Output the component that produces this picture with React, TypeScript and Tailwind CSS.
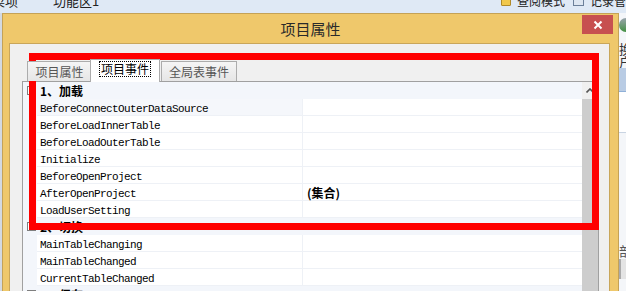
const loadRows = [
  "BeforeConnectOuterDataSource",
  "BeforeLoadInnerTable",
  "BeforeLoadOuterTable",
  "Initialize",
  "BeforeOpenProject",
  "AfterOpenProject",
  "LoadUserSetting",
];

const switchRows = ["MainTableChanging", "MainTableChanged", "CurrentTableChanged"];

const cjk = "font-['Noto_Sans_CJK_SC','Noto_Sans',sans-serif]";

function Category({ label }: { label: string }) {
  return (
    <div className="flex h-[17px] items-center bg-[#f3f6fb]">
      <div className="flex w-[14px] justify-center pl-[2px]">
        <div className="relative h-[9px] w-[9px] border border-[#7f7f7f] bg-white">
          <div className="absolute left-[1px] top-[3px] h-px w-[5px] bg-black" />
        </div>
      </div>
      <span className={`pl-[3px] pt-[1px] text-[12px] font-bold leading-none text-black ${cjk}`}>{label}</span>
    </div>
  );
}

function Row({ name, value, active }: { name: string; value?: string; active?: boolean }) {
  return (
    <div className="flex h-[17px]">
      <div className="w-[14px] bg-[#f3f6fb]" />
      <div
        className={`flex w-[266px] items-center border-b border-r border-[#eef1f6] pl-[3px] pt-[4px] font-['Liberation_Mono',monospace] text-[11px] tracking-[-0.6px] text-black ${
          active ? "bg-[#f5f7fb]" : "bg-white"
        }`}
      >
        {name}
      </div>
      <div className="flex flex-1 items-center border-b border-[#eef1f6] bg-white pl-[4px] pt-[2px]">
        {value && <span className={`text-[12px] font-bold leading-none text-black ${cjk}`}>{value}</span>}
      </div>
    </div>
  );
}

export default function App() {
  return (
    <div className={`relative h-[291px] w-[626px] overflow-hidden bg-[#dfe9f5] ${cjk}`}>
      {/* ribbon strip behind the dialog */}
      <div className="flex h-[13px] overflow-hidden text-[13px] leading-[13px] text-[#222]">
        <div className="-mt-[12px] flex w-full items-center">
          <span className="-ml-[8px]">菜项</span>
          <span className="ml-[35px]">功能区1</span>
          <span className="ml-auto flex items-center">
            <span className="mr-[6px] h-[10px] w-[10px] rounded-[1px] border border-[#b08a2a] bg-[#f1c84c]" />
            <span className="text-[12px]">查阅模式</span>
            <span className="ml-[8px] mr-[6px] h-[10px] w-[11px] border border-[#6b7f99] bg-[#dde6f1]" />
            <span className="text-[12px]">记录管</span>
          </span>
        </div>
      </div>

      <div className="flex h-[278px]">
        <div className="w-[2px] bg-[#d3d9e1]" />

        {/* dialog */}
        <div className="flex w-[617px] flex-col border border-b-0 border-[#c4a257] bg-[#efc86b]">
          <div className="relative flex h-[29px] shrink-0 items-center justify-center">
            <span className="text-[15px] leading-none text-[#2a2a2a]">项目属性</span>
            <div className="absolute right-[5px] top-[1px] flex h-[19px] w-[31px] items-center justify-center bg-[#c75050]">
              <svg width="10" height="10" viewBox="0 0 10 10">
                <path d="M1.5 1.5L8.5 8.5M8.5 1.5L1.5 8.5" stroke="white" strokeWidth="2" />
              </svg>
            </div>
          </div>

          <div className="ml-[6px] mr-[8px] min-h-0 flex-1 overflow-hidden border border-b-0 border-[#c9a65a] bg-[#f0f0f0] pl-[12px] pt-[15px]">
            {/* tabs */}
            <div className="relative z-10 flex h-[22px] items-start pl-[5px] text-[12px] leading-none">
              <div className="mt-[2px] flex h-[20px] w-[65px] items-center justify-center border border-b-0 border-[#acacac] bg-gradient-to-b from-[#f5f5f5] to-[#e6e6e6] text-[#555]">
                项目属性
              </div>
              <div className="-ml-[2px] flex h-[23px] w-[70px] justify-center border border-b-0 border-[#acacac] bg-white pt-[1px] text-black">
                <div className="flex h-[16px] items-center border border-dotted border-black px-[1px]">项目事件</div>
              </div>
              <div className="ml-[1px] mt-[2px] flex h-[20px] w-[76px] items-center justify-center border border-b-0 border-[#acacac] bg-gradient-to-b from-[#f5f5f5] to-[#e6e6e6] text-[#555]">
                全局表事件
              </div>
            </div>

            {/* property grid */}
            <div className="flex h-[220px] w-[577px] border border-b-0 border-[#a0a0a0] bg-white">
              <div className="flex-1">
                <Category label="1、加载" />
                {loadRows.map((r, i) => (
                  <Row key={r} name={r} active={i === 0} value={r === "AfterOpenProject" ? "(集合)" : undefined} />
                ))}
                <Category label="2、切换" />
                {switchRows.map((r) => (
                  <Row key={r} name={r} />
                ))}
                <Category label="3、保存" />
              </div>
              <div className="flex w-[16px] flex-col">
                <div className="flex h-[17px] justify-center bg-[#f0f0f0] pt-[6px]">
                  <svg width="8" height="5" viewBox="0 0 8 5">
                    <path d="M0.5 4.5L4 1L7.5 4.5" stroke="#555" strokeWidth="1.6" fill="none" />
                  </svg>
                </div>
                <div className="flex-1 bg-[#cdcdcd]" />
              </div>
            </div>
          </div>
        </div>

        {/* app content peeking at the right edge */}
        <div className="flex flex-1 flex-col overflow-hidden bg-[#f4f6f9]">
          <div className="mt-[5px] h-[14px] w-[7px] shrink-0 rounded-l-full bg-gradient-to-b from-[#9aa3ad] to-[#3f8f3f]" />
          <div className="mt-[10px] h-[14px] shrink-0 text-[13px] leading-[14px] text-[#333]">换</div>
          <div className="h-[12px] shrink-0 text-[13px] leading-[12px] text-[#333]">户</div>
          <div className="h-[23px] shrink-0 bg-[#b9cce4]" />
          <div className="h-px shrink-0 bg-[#8fb0d8]" />
          <div className="h-[40px] shrink-0 bg-white" />
          <div className="h-px shrink-0 bg-[#c9d4e2]" />
          <div className="mt-[110px] h-[16px] shrink-0 text-[13px] leading-[16px] text-[#555]">部</div>
          <div className="h-[20px] shrink-0 border-l-2 border-[#aaa] bg-[#e4e4e4]" />
        </div>
      </div>

      {/* red annotation frame */}
      <div className="absolute left-[29px] top-[53px] h-[177px] w-[570px] border-[7px] border-[#ff0000]" />
    </div>
  );
}
